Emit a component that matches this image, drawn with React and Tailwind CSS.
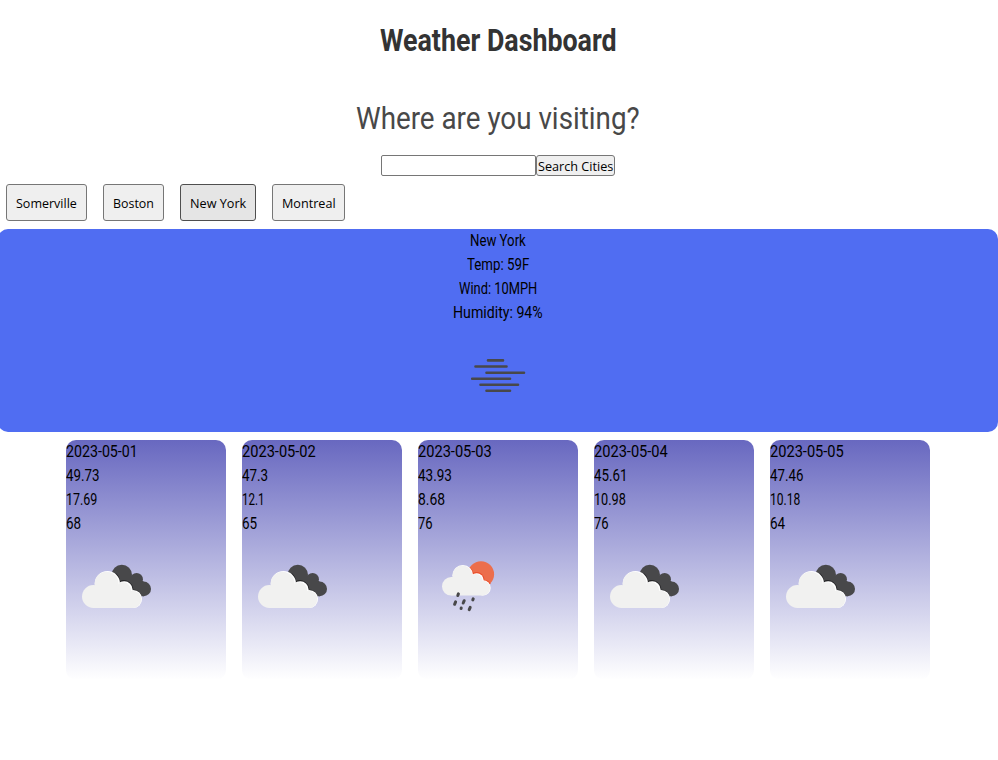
import { useLayoutEffect, useRef, useState } from "react";

// Condenses a line of text horizontally so that it fills the given width.
function Fit({ w, children }) {
  const ref = useRef(null);
  const [scale, setScale] = useState(1);
  useLayoutEffect(() => {
    setScale(w / ref.current.offsetWidth);
  }, [w]);
  return (
    <span className="block text-left" style={{ width: w }}>
      <span
        ref={ref}
        className="inline-block origin-left whitespace-nowrap align-top"
        style={{ transform: `scaleX(${scale})` }}
      >
        {children}
      </span>
    </span>
  );
}

function Mist() {
  return (
    <svg width="100" height="100" viewBox="0 0 100 100" className="block">
      <path
        d="M40 35.4H55M27.5 41.5H58.5M38.5 47.7H76M24.2 53.7H62M32.5 59.8H70M38.5 65.8H62"
        stroke="#48484a"
        strokeWidth="2.6"
        strokeLinecap="round"
      />
    </svg>
  );
}

function Clouds() {
  return (
    <svg width="100" height="100" viewBox="0 0 100 100" className="block">
      <g fill="#48484a">
        <circle cx="55.8" cy="39" r="10.2" />
        <circle cx="70.6" cy="43.2" r="6.3" />
        <circle cx="77.7" cy="52.9" r="7.3" />
        <path d="M55 40H71L78 46V60.2H70L55 52Z" />
      </g>
      <path
        d="M49.6 37.6A13 13 0 0 1 53.8 45.8A8.7 8.7 0 0 1 66.6 54A9.4 9.4 0 0 1 74.6 58.5"
        fill="none"
        stroke="#242426"
        strokeWidth="1.2"
      />
      <g fill="#fff">
        <circle cx="41.4" cy="47.6" r="12.6" />
        <circle cx="58.2" cy="53.6" r="8.4" />
        <circle cx="67" cy="63" r="9.1" />
      </g>
      <g fill="#f1f1f0">
        <circle cx="27.4" cy="60.5" r="11.4" />
        <circle cx="40.6" cy="47.8" r="12" />
        <circle cx="57.2" cy="54.3" r="8" />
        <circle cx="66.7" cy="63.3" r="8.6" />
        <path d="M27 50H57L66 56V71.9H27.4Z" />
      </g>
    </svg>
  );
}

function Rain() {
  return (
    <svg width="100" height="100" viewBox="0 0 100 100" className="block">
      <circle cx="63" cy="38.3" r="13.1" fill="#ec6e4c" />
      <path
        d="M51.6 31.6A10.9 10.9 0 0 1 55.2 37.6A7.2 7.2 0 0 1 65.8 44.3A8 8 0 0 1 72.2 48"
        fill="none"
        stroke="#ea4f2b"
        strokeWidth="1.2"
      />
      <g fill="#fff">
        <circle cx="44.8" cy="39.4" r="10.3" />
        <circle cx="58.7" cy="44.1" r="6.9" />
        <circle cx="65" cy="51.9" r="7.7" />
      </g>
      <g fill="#f1f1f0">
        <circle cx="33.3" cy="50.3" r="9.3" />
        <circle cx="44.4" cy="39.6" r="10" />
        <circle cx="58" cy="44.7" r="6.6" />
        <circle cx="64.8" cy="52.1" r="7.3" />
        <path d="M33 41H57L65 47V59.5H33.3Z" />
      </g>
      <path
        d="M40.4 57.9L39.8 59.5M37.6 65.9L36.6 68.3M46.2 64.7L45.2 67M55.2 62.9L54.8 63.9M43.2 72L43.1 72.5M52.2 71.3L51.2 73.7"
        stroke="#48484a"
        strokeWidth="3"
        strokeLinecap="round"
      />
    </svg>
  );
}

const cities = [
  { name: "Somerville", w: 61, box: "w-[81px]" },
  { name: "Boston", w: 41, box: "w-[61px]" },
  { name: "New York", w: 56, box: "w-[76px]", active: true },
  { name: "Montreal", w: 54, box: "w-[73px]" },
];

const current = [
  { text: "New York", w: 56 },
  { text: "Temp: 59F", w: 62 },
  { text: "Wind: 10MPH", w: 78 },
  { text: "Humidity: 94%", w: 90 },
];

const days = [
  { rows: [["2023-05-01", 71.5], ["49.73", 33], ["17.69", 31], ["68", 15.5]], Icon: Clouds },
  { rows: [["2023-05-02", 73.5], ["47.3", 26], ["12.1", 22.5], ["65", 15.5]], Icon: Clouds },
  { rows: [["2023-05-03", 73.5], ["43.93", 33.5], ["8.68", 27], ["76", 15]], Icon: Rain },
  { rows: [["2023-05-04", 73.5], ["45.61", 33], ["10.98", 31.5], ["76", 15]], Icon: Clouds },
  { rows: [["2023-05-05", 73.5], ["47.46", 33], ["10.18", 30], ["64", 15.5]], Icon: Clouds },
];

export default function App() {
  return (
    <div className="h-[760px] w-[998px] overflow-hidden bg-white pt-4 font-[Roboto,sans-serif] text-[16.5px] leading-6 text-black">
      <div className="-ml-0.5 w-[1000px]">
        <h1 className="flex justify-center text-[32px] leading-[48px] font-bold text-[#333]">
          <Fit w={237}>Weather Dashboard</Fit>
        </h1>
        <h2 className="mt-[30px] flex justify-center text-[32px] leading-[48px] text-[#484848]">
          <Fit w={284}>Where are you visiting?</Fit>
        </h2>

        <form className="mt-[13px] flex justify-center" onSubmit={(e) => e.preventDefault()}>
          <input aria-label="City" className="h-[21px] w-[155px] rounded-[2px] border border-[#767676] bg-white px-1" />
          <button className="flex h-[21px] w-[79px] items-center justify-center rounded-[3px] border border-[#767676] bg-[#efefef] font-['Open_Sans',sans-serif] text-[13.33px] leading-[18px]">
            <Fit w={75}>Search Cities</Fit>
          </button>
        </form>

        <div className="mt-2 flex gap-4 pl-2">
          {cities.map((c) => (
            <button
              key={c.name}
              className={`${c.box} flex h-[37px] items-center justify-center rounded-[3px] border font-['Open_Sans',sans-serif] text-[13.33px] leading-[18px] ${
                c.active ? "border-[#4f4f4f] bg-[#e5e5e5]" : "border-[#767676] bg-[#efefef]"
              }`}
            >
              <Fit w={c.w}>{c.name}</Fit>
            </button>
          ))}
        </div>

        <section className="mt-2 flex h-[203px] flex-col items-center rounded-[10px] bg-[#506df2]">
          {current.map((r) => (
            <Fit key={r.text} w={r.w}>{r.text}</Fit>
          ))}
          <Mist />
        </section>

        <div className="mt-2 flex justify-center gap-4">
          {days.map(({ rows, Icon }) => (
            <article key={rows[0][0]} className="h-60 w-40 rounded-[10px] bg-linear-to-b/srgb from-[#6868c0] to-white">
              {rows.map(([text, w]) => (
                <Fit key={text} w={w}>{text}</Fit>
              ))}
              <Icon />
            </article>
          ))}
        </div>
      </div>
    </div>
  );
}
